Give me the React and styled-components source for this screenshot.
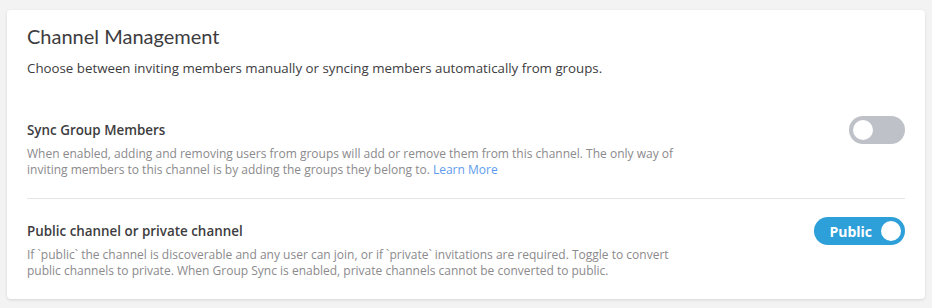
import React from 'react';
import styled, { createGlobalStyle } from 'styled-components';

const GlobalStyle = createGlobalStyle`
  html, body {
    margin: 0;
    padding: 0;
    background: #f3f3f3;
    font-family: "Open Sans", "Noto Sans", sans-serif;
  }
`;

function Toggle({ on, label }) {
  return (
    <StyledToggle $on={on}>
      {label && <span className="toggle__label">{label}</span>}
      <span className="toggle__knob" />
    </StyledToggle>
  );
}

function Setting({ title, children, toggle, divider }) {
  return (
    <StyledSetting $divider={divider}>
      <div className="setting__text">
        <div className="setting__title">{title}</div>
        <p className="setting__desc">{children}</p>
      </div>
      {toggle}
    </StyledSetting>
  );
}

export default function App() {
  return (
    <Page>
      <GlobalStyle />
      <Card>
        <CardHeader>
          <h2>Channel Management</h2>
          <p>Choose between inviting members manually or syncing members automatically from groups.</p>
        </CardHeader>
        <Setting title="Sync Group Members" divider toggle={<Toggle on={false} />}>
          When enabled, adding and removing users from groups will add or remove them from this channel. The only way of
          inviting members to this channel is by adding the groups they belong to. <a href="#">Learn More</a>
        </Setting>
        <Setting title="Public channel or private channel" toggle={<Toggle on label="Public" />}>
          If `public` the channel is discoverable and any user can join, or if `private` invitations are required. Toggle to convert
          public channels to private. When Group Sync is enabled, private channels cannot be converted to public.
        </Setting>
      </Card>
    </Page>
  );
}

const Page = styled.div`
  padding: 10px 7px 8px 7px;
  width: 918px;
`;

const Card = styled.div`
  background: #fff;
  border-radius: 4px;
  box-shadow: 0 1px 3px rgba(0, 0, 0, 0.12);
  padding: 12px 20px 0 20px;
  color: #3d3c40;
`;

const CardHeader = styled.div`
  margin-bottom: 20px;

  h2 {
    margin: 0;
    font-family: Lato, "Open Sans", sans-serif;
    font-size: 20px;
    font-weight: 400;
    line-height: 28px;
    color: #3d3c40;
  }

  p {
    margin: 8px 0 0;
    font-size: 13.3px;
    line-height: 20px;
  }
`;

const StyledSetting = styled.div`
  display: flex;
  align-items: flex-start;
  justify-content: space-between;
  padding: 22px 0 20px;
  border-bottom: ${p => (p.$divider ? '1px solid #e4e4e4' : 'none')};

  .setting__text {
    max-width: 665px;
  }

  .setting__title {
    font-size: 13.4px;
    font-weight: 600;
    line-height: 20px;
    margin-bottom: 6px;
  }

  .setting__desc {
    margin: 0;
    font-size: 12px;
    line-height: 16px;
    color: #8b8a8c;
  }

  a {
    color: #5d9cec;
    text-decoration: none;
  }
`;

const StyledToggle = styled.button`
  display: flex;
  align-items: center;
  justify-content: ${p => (p.$on ? 'flex-end' : 'flex-start')};
  gap: 9px;
  margin-top: -4px;
  height: 28px;
  min-width: 56px;
  padding: 0 4px;
  border: none;
  border-radius: 14px;
  background: ${p => (p.$on ? '#2d9fd9' : '#bec1c7')};
  font-family: inherit;

  .toggle__label {
    color: #fff;
    font-size: 14px;
    font-weight: 700;
    padding-left: 11px;
  }

  .toggle__knob {
    width: 20px;
    height: 20px;
    border-radius: 50%;
    background: #fff;
  }
`;
